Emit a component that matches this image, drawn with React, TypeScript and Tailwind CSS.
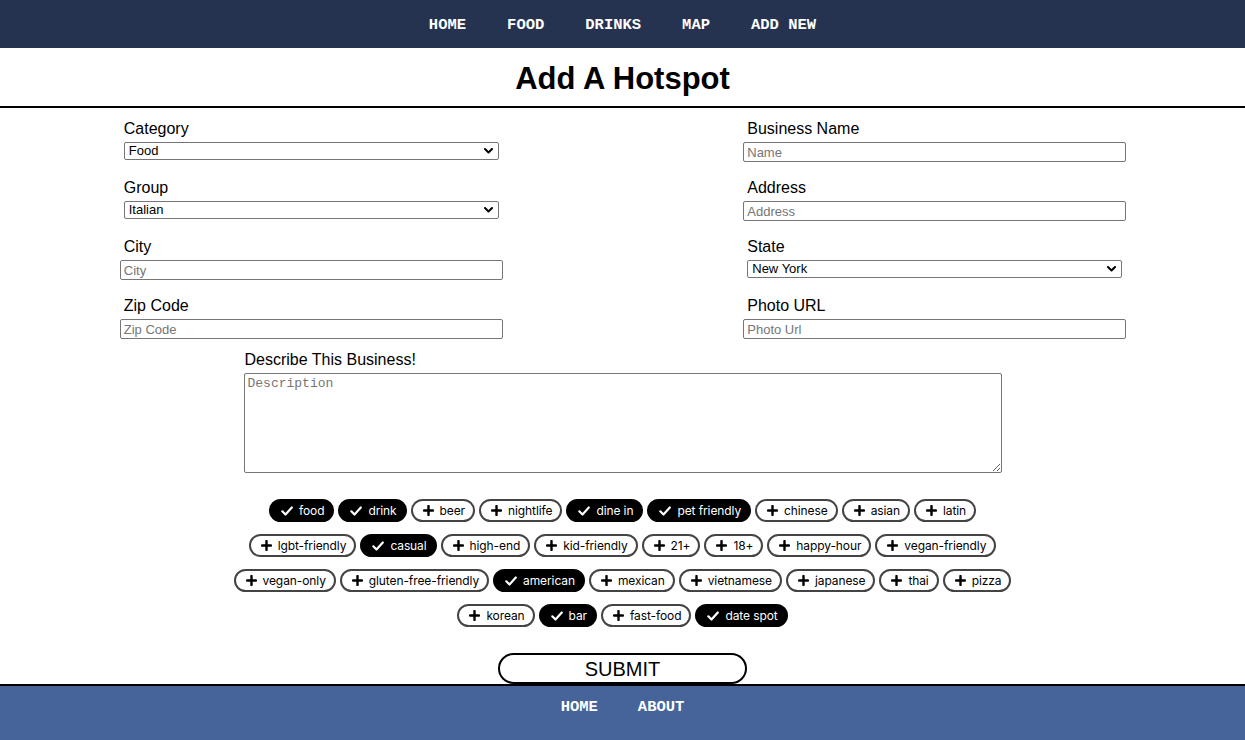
import React from "react";

const navLinks = ["HOME", "FOOD", "DRINKS", "MAP", "ADD NEW"];

// tag rows, laid out as in the form (true = selected)
const tagRows: [string, boolean][][] = [
  [
    ["food", true],
    ["drink", true],
    ["beer", false],
    ["nightlife", false],
    ["dine in", true],
    ["pet friendly", true],
    ["chinese", false],
    ["asian", false],
    ["latin", false],
  ],
  [
    ["lgbt-friendly", false],
    ["casual", true],
    ["high-end", false],
    ["kid-friendly", false],
    ["21+", false],
    ["18+", false],
    ["happy-hour", false],
    ["vegan-friendly", false],
  ],
  [
    ["vegan-only", false],
    ["gluten-free-friendly", false],
    ["american", true],
    ["mexican", false],
    ["vietnamese", false],
    ["japanese", false],
    ["thai", false],
    ["pizza", false],
  ],
  [
    ["korean", false],
    ["bar", true],
    ["fast-food", false],
    ["date spot", true],
  ],
];

const Chevron = () => (
  <svg
    className="pointer-events-none absolute right-[6px] top-1/2 -translate-y-1/2"
    width="9"
    height="6"
    viewBox="0 0 9 6"
    fill="none"
    stroke="#000"
    strokeWidth="2"
    strokeLinecap="round"
    strokeLinejoin="round"
  >
    <path d="M1 1l3.5 3.5L8 1" />
  </svg>
);

const CheckIcon = () => (
  <svg width="12" height="10" viewBox="0 0 12 10" fill="none" stroke="currentColor" strokeWidth="2.2" strokeLinecap="round" strokeLinejoin="round">
    <path d="M1.3 5.3l3.2 3.2L10.8 1.5" />
  </svg>
);

const PlusIcon = () => (
  <svg width="11" height="11" viewBox="0 0 11 11" fill="none" stroke="currentColor" strokeWidth="2.4" strokeLinecap="round">
    <path d="M5.5 1v9M1 5.5h9" />
  </svg>
);

const SelectField = ({ label, value }: { label: string; value: string }) => (
  <div className="flex h-[43px] w-[383px] flex-col">
    <label className="pl-[4px] pt-[1px] text-[16px] leading-[18px]">{label}</label>
    <div className="relative mx-auto mt-[4px] w-[375px]">
      <select
        defaultValue={value}
        className="block h-[18px] w-full appearance-none rounded-[2px] border border-[#767676] bg-white pl-[4px] text-[13px] leading-[16px] text-black outline-none"
      >
        <option>{value}</option>
      </select>
      <Chevron />
    </div>
  </div>
);

const InputField = ({ label, placeholder }: { label: string; placeholder: string }) => (
  <div className="flex h-[43px] w-[383px] flex-col">
    <label className="pl-[4px] pt-[1px] text-[16px] leading-[18px]">{label}</label>
    <input
      placeholder={placeholder}
      className="mt-[4px] block h-[20px] w-full rounded-[2px] border border-[#767676] bg-white px-[3px] text-[13px] outline-none placeholder:text-[#757575]"
    />
  </div>
);

const Chip = ({ name, on }: { name: string; on: boolean }) => (
  <button
    type="button"
    className={`flex h-[23px] items-center gap-[6px] rounded-full border-2 pl-[10px] pr-[8px] text-[12px] leading-none tracking-[-0.1px] ${
      on ? "border-black bg-black text-white" : "border-[#444] bg-white text-black"
    }`}
    style={{ fontFamily: "Inter, sans-serif" }}
  >
    {on ? <CheckIcon /> : <PlusIcon />}
    {name}
  </button>
);

export default function App() {
  return (
    <div
      className="flex min-h-[740px] flex-col bg-white text-black"
      style={{ fontFamily: "'Liberation Sans', Arial, sans-serif" }}
    >
      <header
        className="flex h-[48px] items-center justify-center gap-[41px] bg-[#263350] pt-[3px] text-[15.5px] font-bold text-white"
        style={{ fontFamily: "'Liberation Mono', 'Courier New', monospace" }}
      >
        {navLinks.map((l) => (
          <a key={l} href="#">
            {l}
          </a>
        ))}
      </header>

      <div className="flex h-[60px] items-center justify-center border-b-2 border-black pt-[5px]">
        <h1 className="text-[31px] font-bold">Add A Hotspot</h1>
      </div>

      <form className="flex flex-col pt-[11px]" onSubmit={(e) => e.preventDefault()}>
        <div className="grid grid-cols-2">
          <div className="flex flex-col items-center gap-[16px]">
            <SelectField label="Category" value="Food" />
            <SelectField label="Group" value="Italian" />
            <InputField label="City" placeholder="City" />
            <InputField label="Zip Code" placeholder="Zip Code" />
          </div>
          <div className="flex flex-col items-center gap-[16px] pl-[2px]">
            <InputField label="Business Name" placeholder="Name" />
            <InputField label="Address" placeholder="Address" />
            <SelectField label="State" value="New York" />
            <InputField label="Photo URL" placeholder="Photo Url" />
          </div>
        </div>

        <div className="mx-auto mt-[11px] flex w-[758px] flex-col">
          <label className="pl-[1px] pt-[1px] text-[16px] leading-[18px]">Describe This Business!</label>
          <textarea
            placeholder="Description"
            className="mt-[4px] block h-[100px] w-full rounded-[2px] border border-[#767676] bg-white px-[3px] pt-[2px] text-[13px] leading-[16px] outline-none placeholder:text-[#757575]"
            style={{ fontFamily: "'Liberation Mono', monospace" }}
          />
        </div>

        <div className="mt-[26px] flex flex-col items-center gap-[12px]">
          {tagRows.map((row, i) => (
            <div key={i} className="flex gap-[4px]">
              {row.map(([name, on]) => (
                <Chip key={name} name={name} on={on} />
              ))}
            </div>
          ))}
        </div>

        <div className="mt-[26px] flex justify-center">
          <button
            type="submit"
            className="h-[31px] w-[249px] rounded-[16px] border-2 border-black bg-white text-[20px] leading-none"
          >
            SUBMIT
          </button>
        </div>
      </form>

      <footer
        className="flex h-[56px] justify-center gap-[40px] border-t-2 border-black bg-[#46639a] pt-[11px] text-[15.5px] font-bold leading-[20px] text-white"
        style={{ fontFamily: "'Liberation Mono', 'Courier New', monospace" }}
      >
        <a href="#">HOME</a>
        <a href="#">ABOUT</a>
      </footer>
    </div>
  );
}
